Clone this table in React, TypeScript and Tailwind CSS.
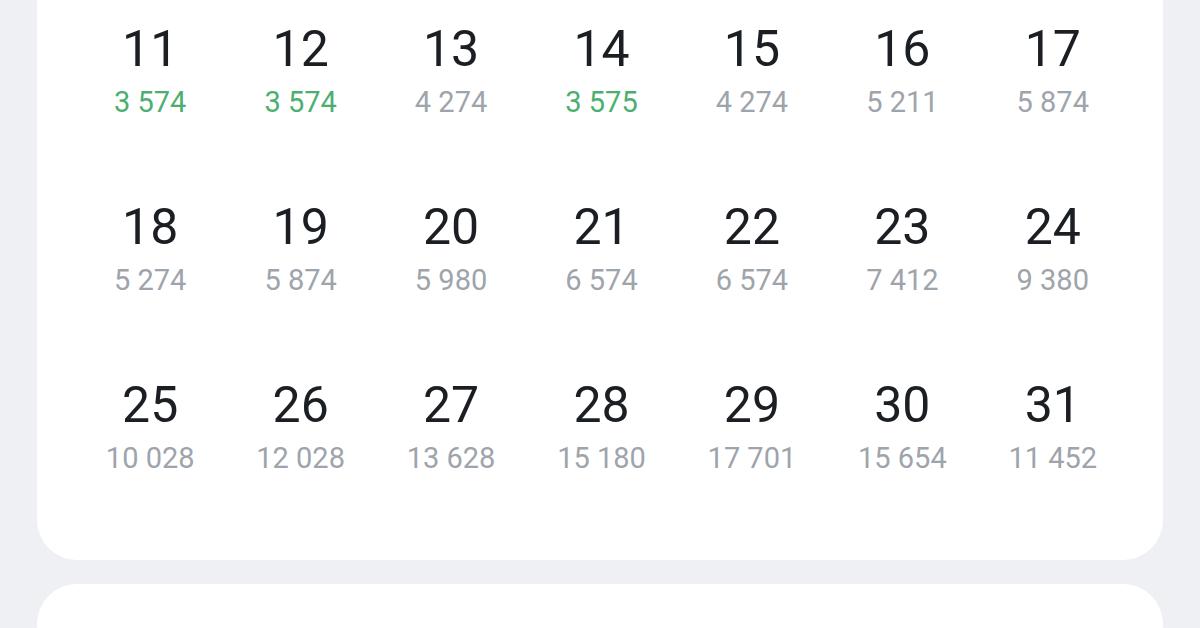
import React from "react";

type Day = { day: number; price: string; cheap?: boolean };

const days: Day[] = [
  { day: 11, price: "3 574", cheap: true },
  { day: 12, price: "3 574", cheap: true },
  { day: 13, price: "4 274" },
  { day: 14, price: "3 575", cheap: true },
  { day: 15, price: "4 274" },
  { day: 16, price: "5 211" },
  { day: 17, price: "5 874" },
  { day: 18, price: "5 274" },
  { day: 19, price: "5 874" },
  { day: 20, price: "5 980" },
  { day: 21, price: "6 574" },
  { day: 22, price: "6 574" },
  { day: 23, price: "7 412" },
  { day: 24, price: "9 380" },
  { day: 25, price: "10 028" },
  { day: 26, price: "12 028" },
  { day: 27, price: "13 628" },
  { day: 28, price: "15 180" },
  { day: 29, price: "17 701" },
  { day: 30, price: "15 654" },
  { day: 31, price: "11 452" },
];

const DayCell: React.FC<{ item: Day }> = ({ item }) => (
  <div className="flex flex-col items-center">
    <span className="text-[50px] leading-[60px] text-[#1b1e22]">
      {item.day}
    </span>
    <span
      className={
        item.cheap
          ? "mt-[5px] whitespace-nowrap text-[29px] leading-[36px] text-[#4caf6f]"
          : "mt-[5px] whitespace-nowrap text-[29px] leading-[36px] text-[#9ea4ab]"
      }
    >
      {item.price}
    </span>
  </div>
);

export default function App() {
  return (
    <div
      className="h-[628px] w-[1200px] overflow-hidden bg-[#eff0f4] px-[37px]"
      style={{ fontFamily: "Roboto, 'Noto Sans', sans-serif" }}
    >
      <div className="rounded-b-[40px] bg-white pl-[38px] pr-[35px] pt-[19px] pb-[84px]">
        <div className="grid grid-cols-7 gap-y-[77px]">
          {days.map((d) => (
            <DayCell key={d.day} item={d} />
          ))}
        </div>
      </div>
      <div className="mt-[24px] h-[200px] rounded-t-[40px] bg-white" />
    </div>
  );
}
